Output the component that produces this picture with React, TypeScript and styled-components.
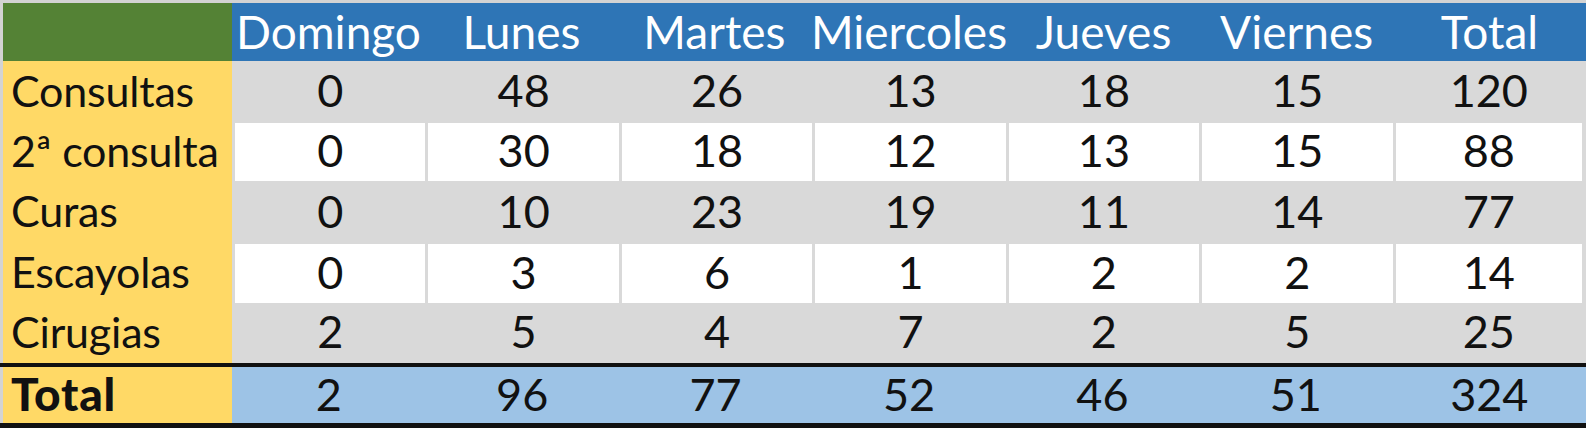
import React from "react";
import styled, { createGlobalStyle } from "styled-components";

const days = ["Domingo", "Lunes", "Martes", "Miercoles", "Jueves", "Viernes", "Total"];

const rows = [
  { label: "Consultas", values: [0, 48, 26, 13, 18, 15, 120], height: 62 },
  { label: "2ª consulta", values: [0, 30, 18, 12, 13, 15, 88], height: 58 },
  { label: "Curas", values: [0, 10, 23, 19, 11, 14, 77], height: 63 },
  { label: "Escayolas", values: [0, 3, 6, 1, 2, 2, 14], height: 59 },
  { label: "Cirugias", values: [2, 5, 4, 7, 2, 5, 25], height: 60 },
];

const totals = [2, 96, 77, 52, 46, 51, 324];

const GlobalStyle = createGlobalStyle`
  html, body {
    margin: 0;
    padding: 0;
    background: #ffffff;
  }
  body {
    font-family: Lato, "Noto Sans", sans-serif;
  }
`;

const Sheet = styled.div`
  width: 1586px;
  height: 428px;
  box-sizing: border-box;
  padding: 3px 0 0 3px;
  background: #d3d3d3;
  overflow: hidden;
`;

const Row = styled.div<{ $h: number }>`
  display: grid;
  grid-template-columns: 229px repeat(7, 1fr);
  height: ${(p) => p.$h}px;
`;

const Corner = styled.div`
  background: #548235;
`;

const HeadCell = styled.div`
  display: flex;
  align-items: center;
  justify-content: center;
  background: #2e75b6;
  color: #ffffff;
  font-size: 46px;
  white-space: nowrap;
  padding-bottom: 2px;
`;

const Label = styled.div<{ $bold?: boolean }>`
  display: flex;
  align-items: center;
  background: #ffd966;
  color: #111111;
  font-size: ${(p) => (p.$bold ? 46 : 43)}px;
  font-weight: ${(p) => (p.$bold ? 900 : 400)};
  letter-spacing: ${(p) => (p.$bold ? "0.8px" : "-0.2px")};
  padding: 0 0 4px 8px;
  white-space: nowrap;
  overflow: hidden;
`;

const Cell = styled.div<{ $shade: boolean; $last?: boolean }>`
  display: flex;
  align-items: center;
  justify-content: center;
  background: ${(p) => (p.$shade ? "#d9d9d9" : "#ffffff")};
  border-left: 3px solid #d9d9d9;
  border-right: ${(p) => (p.$last ? "4px solid #d9d9d9" : "none")};
  color: #111111;
  font-size: 45px;
  padding-bottom: 4px;
`;

const TotalRow = styled(Row)`
  border-top: 4px solid #111111;
  border-bottom: 5px solid #111111;
  margin-left: -3px;
  padding-left: 3px;
  background: #d3d3d3;
`;

const TotalCell = styled.div`
  display: flex;
  align-items: center;
  justify-content: center;
  background: #9dc3e6;
  color: #111111;
  font-size: 45px;
  padding-bottom: 2px;
`;

export default function App() {
  return (
    <>
      <GlobalStyle />
      <Sheet>
        <Row $h={58}>
          <Corner />
          {days.map((d) => (
            <HeadCell key={d}>{d}</HeadCell>
          ))}
        </Row>
        {rows.map((r, i) => (
          <Row $h={r.height} key={r.label}>
            <Label>{r.label}</Label>
            {r.values.map((v, j) => (
              <Cell $shade={i % 2 === 0} $last={j === 6} key={j}>
                {v}
              </Cell>
            ))}
          </Row>
        ))}
        <TotalRow $h={56}>
          <Label $bold>Total</Label>
          {totals.map((v, j) => (
            <TotalCell key={j}>{v}</TotalCell>
          ))}
        </TotalRow>
      </Sheet>
    </>
  );
}
